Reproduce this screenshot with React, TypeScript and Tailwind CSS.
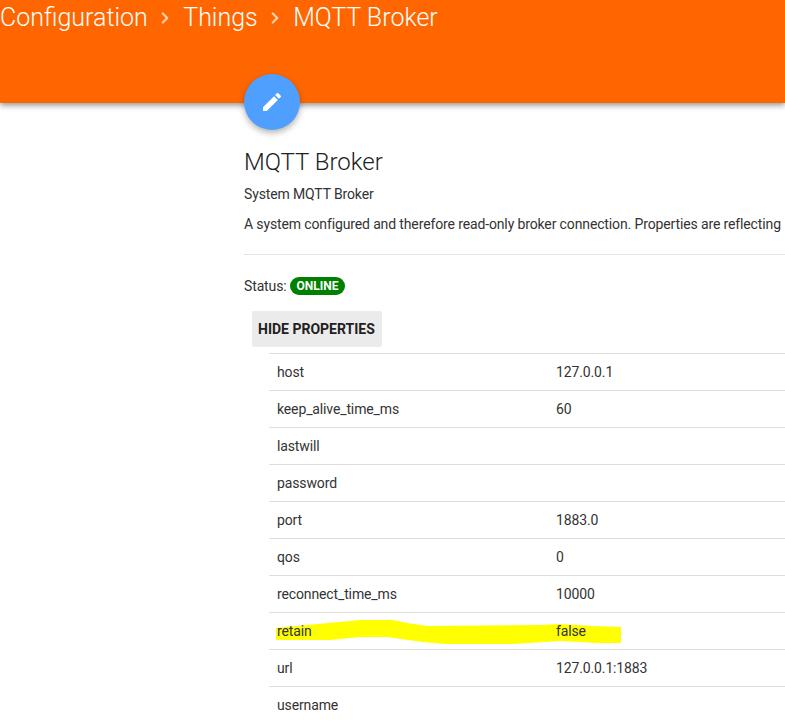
import React from "react";
import { ChevronRight } from "lucide-react";

const properties = [
  { name: "host", value: "127.0.0.1" },
  { name: "keep_alive_time_ms", value: "60" },
  { name: "lastwill", value: "" },
  { name: "password", value: "" },
  { name: "port", value: "1883.0" },
  { name: "qos", value: "0" },
  { name: "reconnect_time_ms", value: "10000" },
  { name: "retain", value: "false" },
  { name: "url", value: "127.0.0.1:1883" },
  { name: "username", value: "" },
];

function Crumb({ children }: { children: React.ReactNode }) {
  return <span className="whitespace-nowrap">{children}</span>;
}

export default function App() {
  return (
    <div className="h-[722px] w-[785px] overflow-hidden bg-white font-['Roboto',sans-serif] text-[14px] tracking-[-0.13px] text-[#333333]">
      <header className="relative h-[103px] bg-[#ff6600] shadow-[0_2px_6px_rgba(0,0,0,0.45)]">
        <div className="flex h-[35px] items-center text-[25px] font-light leading-none tracking-normal text-white">
          <Crumb>Configuration</Crumb>
          <ChevronRight size={18} strokeWidth={3} className="ml-[8px] mr-[9.4px] text-white/70" />
          <Crumb>Things</Crumb>
          <ChevronRight size={18} strokeWidth={3} className="ml-[8px] mr-[9.4px] text-white/70" />
          <Crumb>MQTT Broker</Crumb>
        </div>
        <div className="absolute left-[244px] top-[74px] flex h-[56px] w-[56px] items-center justify-center rounded-full bg-[#4f9fff] shadow-[0_3px_6px_rgba(0,0,0,0.3)]">
          <svg width="24" height="24" viewBox="0 0 24 24" fill="#fff">
            <path d="M3 17.25V21h3.75L17.81 9.94l-3.75-3.75L3 17.25zM20.71 7.04a1 1 0 0 0 0-1.41l-2.34-2.34a1 1 0 0 0-1.41 0l-1.83 1.83 3.75 3.75 1.83-1.83z" />
          </svg>
        </div>
      </header>

      <main className="pl-[244px] pt-[44px]">
        <h1 className="text-[24px] font-light leading-[30px] tracking-normal text-[#212121]">MQTT Broker</h1>
        <p className="mt-[7px] leading-[20px]">System MQTT Broker</p>
        <p className="mt-[10px] whitespace-nowrap leading-[20px]">
          A system configured and therefore read-only broker connection. Properties are reflecting
        </p>
        <div className="mt-[20px] w-[600px] border-t border-[#e4e4e4]" />

        <div className="mt-[21px] flex items-center gap-[3px] leading-[20px]">
          <span>Status:</span>
          <span className="rounded-full bg-[#008000] px-[7px] text-[12px] font-bold leading-[18px] tracking-normal text-white">ONLINE</span>
        </div>

        <button className="ml-[8px] mt-[15px] flex h-[36px] w-[130px] items-center rounded-[2px] bg-[#ebebeb] px-[6px] text-[14px] font-bold tracking-normal text-[#212121]">
          HIDE PROPERTIES
        </button>

        <div className="ml-[25px] mt-[6px] w-[600px]">
          {properties.map((p) => (
            <div key={p.name} className="relative flex h-[37px] items-center border-t border-[#dedede] pl-[8px] pt-[1px]">
              {p.name === "retain" && (
                <svg className="absolute left-0 top-0" width="360" height="37" viewBox="0 0 360 37">
                  <path
                    fill="#ffff00"
                    d="M7 15 L59 10 L81 8 L91 7 L124 7 L138 10 L158 13 L271 12 L291 11 L324 13 L352 14 L352 30 L328 30 L311 29 L291 28 L244 31 L176 31 L154 29 L118 24 L91 24 L61 27 L7 27 Z"
                  />
                </svg>
              )}
              <span className="relative w-[279px]">{p.name}</span>
              <span className="relative">{p.value}</span>
            </div>
          ))}
        </div>
      </main>
    </div>
  );
}
